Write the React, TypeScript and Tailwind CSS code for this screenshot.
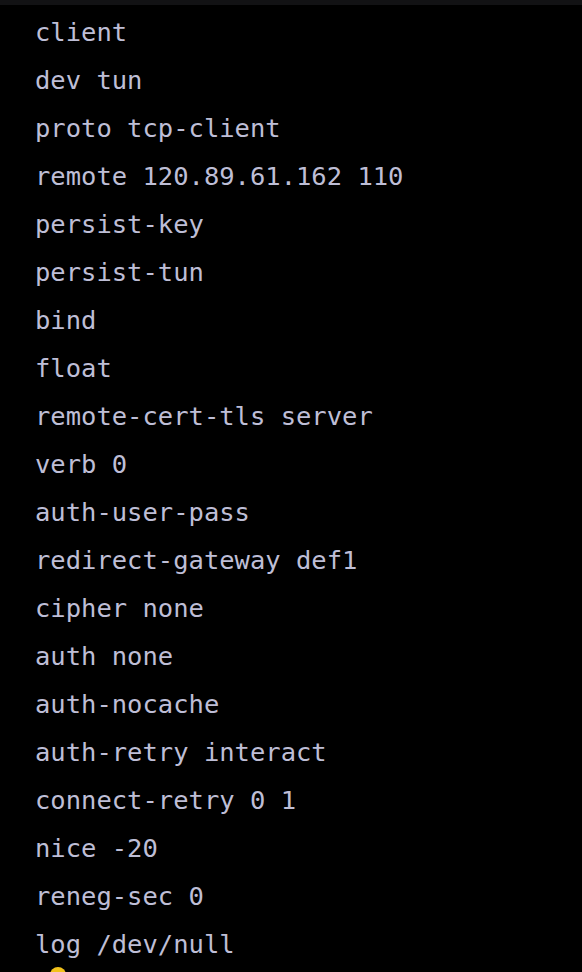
const lines = [
  "client",
  "dev tun",
  "proto tcp-client",
  "remote 120.89.61.162 110",
  "persist-key",
  "persist-tun",
  "bind",
  "float",
  "remote-cert-tls server",
  "verb 0",
  "auth-user-pass",
  "redirect-gateway def1",
  "cipher none",
  "auth none",
  "auth-nocache",
  "auth-retry interact",
  "connect-retry 0 1",
  "nice -20",
  "reneg-sec 0",
  "log /dev/null",
];

export default function App() {
  return (
    <div className="relative w-[582px] h-[972px] bg-black overflow-hidden flex flex-col">
      <div className="h-[5px] bg-[#121214]" />
      <div className="flex flex-col pl-[35px] pt-[3px] font-['DejaVu_Sans_Mono',monospace] text-[25.5px] leading-[48px] text-[#bebed6] whitespace-pre">
        {lines.map((l) => (
          <div key={l}>{l}</div>
        ))}
      </div>
      {/* cursor dot peeking in at the bottom */}
      <div className="absolute left-[50px] top-[967px] w-[16px] h-[16px] rounded-full bg-[#f2c21b]" />
    </div>
  );
}
